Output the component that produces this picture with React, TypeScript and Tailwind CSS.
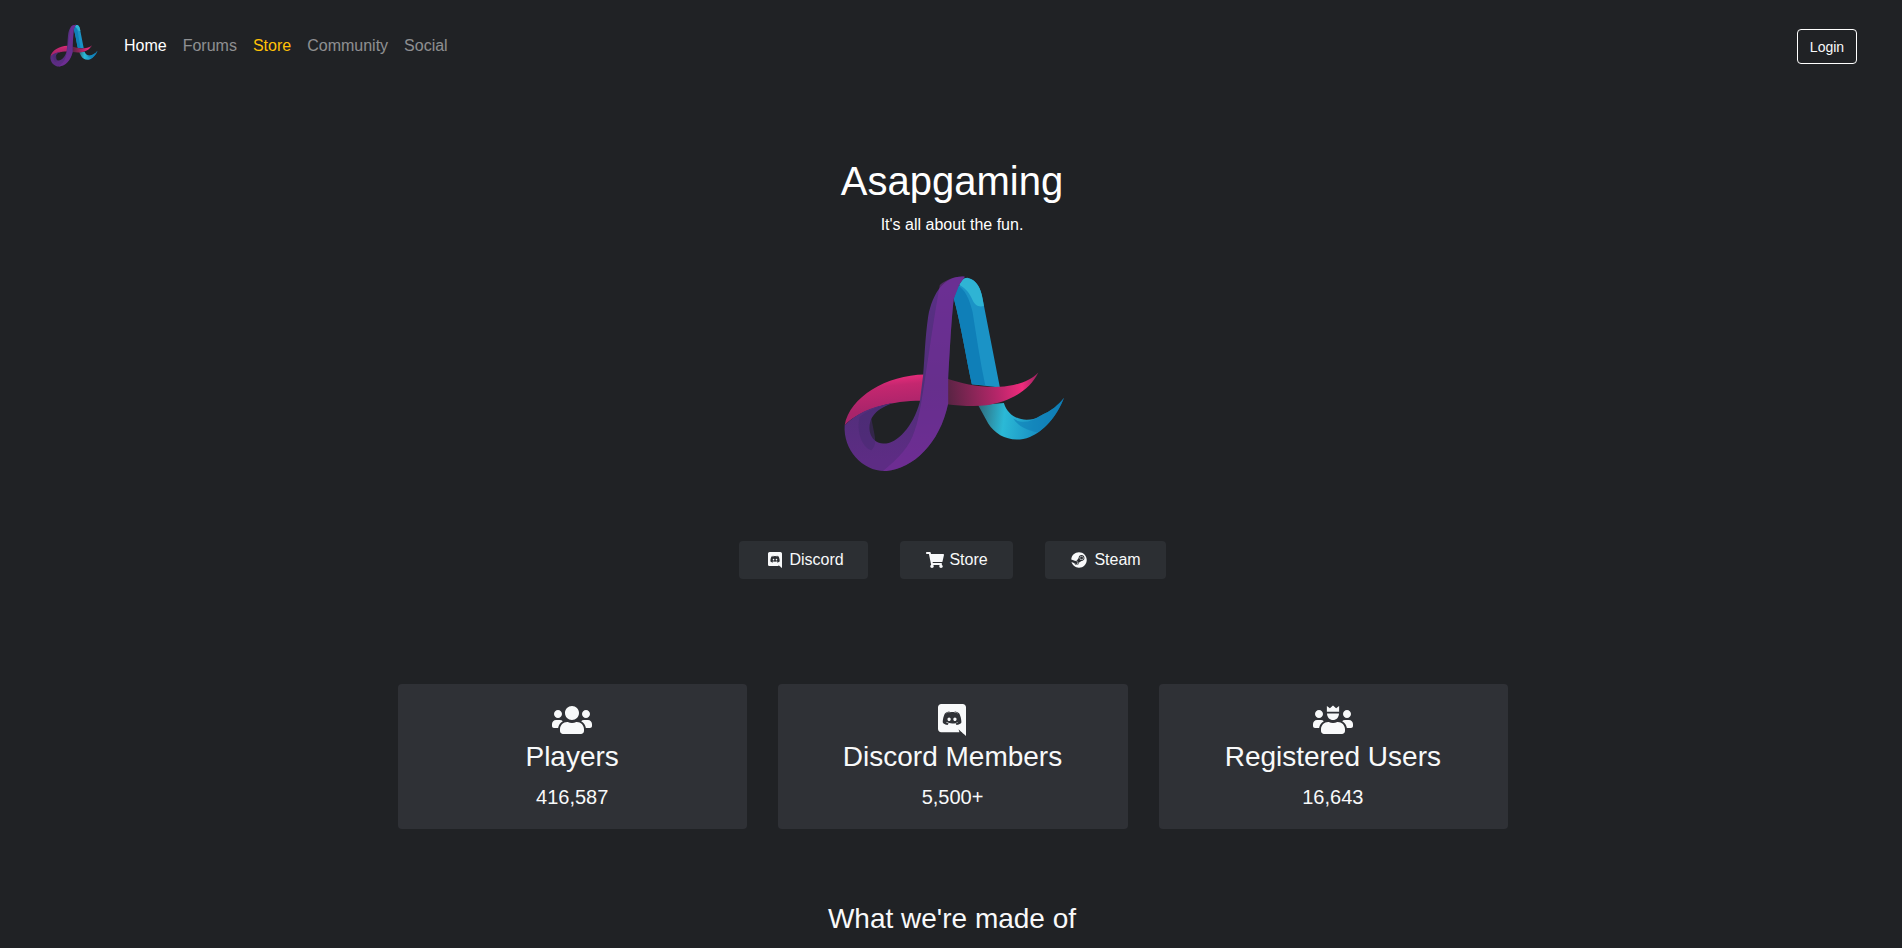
import React from "react";
import { FaShoppingCart, FaSteam, FaUsers } from "react-icons/fa";

const DISCORD_PATH =
  "M297.216 243.2c0 15.616-11.52 28.416-26.112 28.416-14.336 0-26.112-12.8-26.112-28.416s11.52-28.416 26.112-28.416c14.592 0 26.112 12.8 26.112 28.416zm-119.552-28.416c-14.592 0-26.112 12.8-26.112 28.416s11.776 28.416 26.112 28.416c14.592 0 26.112-12.8 26.112-28.416.256-15.616-11.52-28.416-26.112-28.416zM448 52.736V512c-64.494-56.994-43.868-38.128-118.784-107.776l13.568 47.36H52.48C23.552 451.584 0 428.032 0 398.848V52.736C0 23.552 23.552 0 52.48 0h343.04C424.448 0 448 23.552 448 52.736zm-72.96 242.688c0-82.432-36.864-149.248-36.864-149.248-36.864-27.648-71.936-26.88-71.936-26.88l-3.584 4.096c43.52 13.312 63.744 32.512 63.744 32.512-60.811-33.329-132.244-33.335-191.232-7.424-9.472 4.352-15.104 7.424-15.104 7.424s21.248-20.224 67.328-33.536l-2.56-3.072s-35.072-.768-71.936 26.88c0 0-36.864 66.816-36.864 149.248 0 0 21.504 37.12 78.08 38.912 0 0 9.472-11.52 17.152-21.248-32.512-9.728-44.8-30.208-44.8-30.208 3.766 2.636 9.976 6.053 10.496 6.4 43.21 24.198 104.588 32.126 159.744 8.96 8.96-3.328 18.944-8.192 29.44-15.104 0 0-12.8 20.992-46.336 30.464 7.68 9.728 16.896 20.736 16.896 20.736 56.576-1.792 78.336-38.912 78.336-38.912z";

function DiscordBubble({ className }: { className: string }) {
  return (
    <svg viewBox="0 0 448 512" fill="currentColor" className={className}>
      <path d={DISCORD_PATH} />
    </svg>
  );
}

function Logo({ className, id }: { className: string; id: string }) {
  return (
    <svg viewBox="130 72 668 596" className={className}>
      <defs>
        <linearGradient id={`${id}-tail`} x1="540" y1="470" x2="790" y2="500" gradientUnits="userSpaceOnUse">
          <stop offset="0" stopColor="#2f6f80" />
          <stop offset="0.3" stopColor="#2bb9d6" />
          <stop offset="0.68" stopColor="#1a93c4" />
          <stop offset="1" stopColor="#0f7db5" />
        </linearGradient>
        <linearGradient id={`${id}-pink`} x1="240" y1="380" x2="250" y2="480" gradientUnits="userSpaceOnUse">
          <stop offset="0" stopColor="#ea2c7c" />
          <stop offset="0.3" stopColor="#c4276f" />
          <stop offset="1" stopColor="#a8246a" />
        </linearGradient>
        <linearGradient id={`${id}-pink2`} x1="445" y1="430" x2="715" y2="400" gradientUnits="userSpaceOnUse">
          <stop offset="0" stopColor="#5a2444" />
          <stop offset="0.55" stopColor="#b8266a" />
          <stop offset="0.82" stopColor="#ef2b7c" />
          <stop offset="1" stopColor="#9a2560" />
        </linearGradient>
        <linearGradient id={`${id}-purple`} x1="370" y1="100" x2="400" y2="620" gradientUnits="userSpaceOnUse">
          <stop offset="0" stopColor="#5a2f86" />
          <stop offset="0.6" stopColor="#4f2f78" />
          <stop offset="1" stopColor="#5d2c84" />
        </linearGradient>
      </defs>
      <path fill="#1b93c6" d="M462 145C475 110 490 78 505 84C530 90 543 115 548 145L600 412L516 402C500 330 485 230 462 145Z" />
      <path fill="#0f7fb8" d="M462 145L470 104C495 115 510 150 518 185C530 260 540 330 556 405L516 402C500 330 485 230 462 145Z" />
      <path fill="#2fb4d4" d="M478 104C488 82 500 82 510 86C530 92 543 115 548 145L552 168C535 172 525 165 518 150C510 130 498 115 478 104Z" />
      <path fill={`url(#${id}-tail)`} d="M535 465L612 458C625 505 680 522 720 497C755 482 775 465 792 443C770 500 730 545 690 560C640 580 590 560 565 520Z" />
      <path fill="#0f7db5" fillOpacity="0.6" d="M640 505C665 522 695 515 720 497C755 482 775 465 792 443C775 490 745 525 714 547C680 540 655 528 640 505Z" />
      <path fill={`url(#${id}-pink2)`} d="M440 385C490 400 530 412 600 410C640 408 690 395 715 367C690 420 630 455 560 465C520 470 480 466 440 462Z" />
      <path fill={`url(#${id}-pink)`} d="M135 525C150 440 260 375 375 373L375 452C290 450 190 470 135 525Z" />
      <path fill={`url(#${id}-purple)`} d="M135 525C130 600 190 665 260 662C340 655 420 580 445 460L445 385C450 300 455 200 462 145L478 104L495 80C440 75 400 120 385 200C375 270 375 320 370 375L360 455C340 530 290 582 250 580C215 578 200 540 215 505C225 485 245 470 280 458C210 470 170 490 135 525Z" />
      <path fill="#452a70" fillOpacity="0.5" d="M180 500C170 540 185 590 215 600C235 580 225 560 215 505C225 485 245 470 280 458C240 465 205 480 180 500Z" />
      <path fill="#7a2f9e" fillOpacity="0.55" d="M250 662C295 625 330 590 345 540C365 500 385 300 420 105C440 88 470 78 495 80L478 104L462 145C455 200 450 300 445 385L445 460C420 580 340 655 260 662Z" />
    </svg>
  );
}

function CrownUsers({ className }: { className: string }) {
  return (
    <svg viewBox="0 0 640 512" fill="currentColor" className={className}>
      <path d="M96 224c35.3 0 64-28.7 64-64s-28.7-64-64-64-64 28.7-64 64 28.7 64 64 64zm448 0c35.3 0 64-28.7 64-64s-28.7-64-64-64-64 28.7-64 64 28.7 64 64 64zm32 32h-64c-17.6 0-33.5 7.1-45.1 18.6 40.3 22.1 68.9 62 75.1 109.4h66c17.7 0 32-14.3 32-32v-32c0-35.3-28.7-64-64-64zM396.8 288h-8.3c-20.8 10-43.9 16-68.5 16s-47.6-6-68.5-16h-8.3C179.6 288 128 339.6 128 403.2V432c0 26.5 21.5 48 48 48h288c26.5 0 48-21.5 48-48v-28.8c0-63.6-51.6-115.2-115.2-115.2zm-223.7-13.4C161.5 263.1 145.6 256 128 256H64c-35.3 0-64 28.7-64 64v32c0 17.7 14.3 32 32 32h65.9c6.3-47.4 34.9-87.3 75.2-109.4z" />
      <path d="M224 150h192c0 60-43 106-96 106s-96-46-96-106z" />
      <path d="M222 124V32l48 36 50-44 50 44 48-36v92z" />
    </svg>
  );
}

const stats = [
  { label: "Players", value: "416,587", icon: <FaUsers className="w-10 h-8" /> },
  { label: "Discord Members", value: "5,500+", icon: <DiscordBubble className="w-7 h-8" /> },
  { label: "Registered Users", value: "16,643", icon: <CrownUsers className="w-10 h-8" /> },
];

export default function App() {
  return (
    <div className="h-[948px] overflow-hidden bg-[#202225] text-[#f8f9fa] font-['Liberation_Sans',Arial,sans-serif] text-base">
      <nav className="flex items-center justify-between h-[92px] pl-[50px] pr-[45px]">
        <div className="flex items-center">
          <Logo id="nav" className="w-[48px] h-[43px] mt-[-2px]" />
          <ul className="flex ml-[18px] mt-[-1px]">
            <li className="px-2 text-white">Home</li>
            <li className="px-2 text-white/50">Forums</li>
            <li className="px-2 text-[#ffc107]">Store</li>
            <li className="px-2 text-white/50">Community</li>
            <li className="px-2 text-white/50">Social</li>
          </ul>
        </div>
        <button className="w-[60px] h-[35px] mt-[1px] border border-white rounded text-sm text-[#f8f9fa]">Login</button>
      </nav>

      <section className="flex flex-col items-center pl-[2px]">
        <h1 className="mt-[65px] text-[40px] leading-[48px] text-white">Asapgaming</h1>
        <p className="mt-[8px] leading-6 text-white">It's all about the fun.</p>
        <Logo id="hero" className="mt-[37px] ml-[5px] w-[223px] h-[199px]" />
        <div className="flex gap-[32px] mt-[68px]">
          <a className="flex items-center justify-center gap-[7px] pl-[6px] w-[129px] h-[38px] rounded bg-[#2c2f33] text-[#f8f9fa]"><DiscordBubble className="w-[14px] h-4" />Discord</a>
          <a className="flex items-center justify-center gap-[5px] pl-[2px] w-[113px] h-[38px] rounded bg-[#2c2f33] text-[#f8f9fa]"><FaShoppingCart className="w-[18px] h-4" />Store</a>
          <a className="flex items-center justify-center gap-[7px] pl-[2px] w-[121px] h-[38px] rounded bg-[#2c2f33] text-[#f8f9fa]"><FaSteam className="w-4 h-4" />Steam</a>
        </div>
      </section>

      <section className="mt-[105px] ml-[398px] w-[1110px] grid grid-cols-3 gap-[31px]">
        {stats.map((s) => (
          <div key={s.label} className="h-[145px] rounded bg-[#2f3136] flex flex-col items-center pt-[20px] pr-[1px]">
            <div className="h-8 flex items-center">{s.icon}</div>
            <div className="text-[28px] leading-[34px] mt-[4px]">{s.label}</div>
            <div className="text-xl leading-6 mt-[11px]">{s.value}</div>
          </div>
        ))}
      </section>

      <h2 className="mt-[73px] text-center text-[28px] leading-[34px] pl-[2px] text-[#f8f9fa]">What we're made of</h2>
    </div>
  );
}
